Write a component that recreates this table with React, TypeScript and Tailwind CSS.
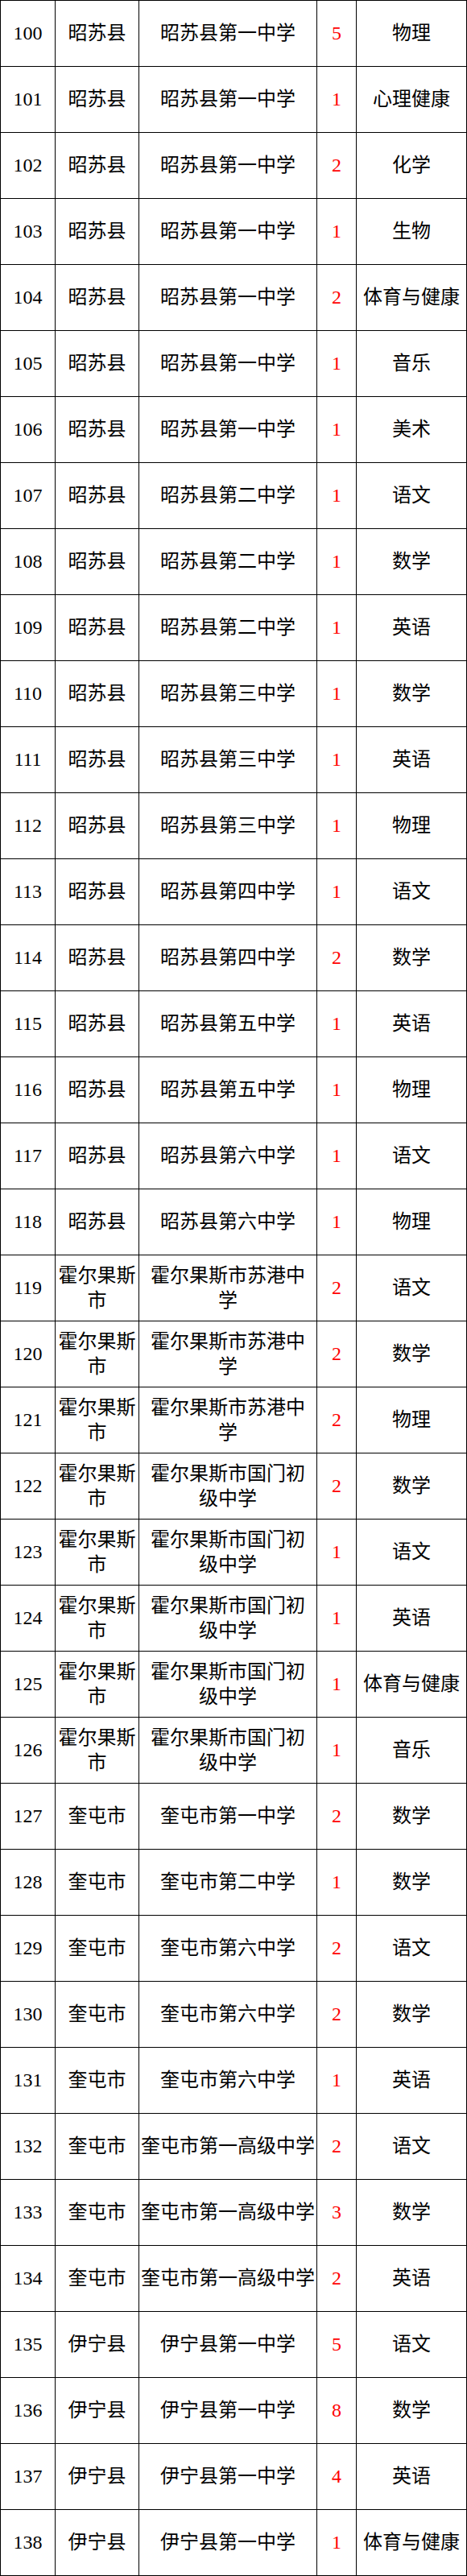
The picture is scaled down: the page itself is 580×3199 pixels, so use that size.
type Row = [number, string[], string[], number, string];

const HUO = ["霍尔果斯", "市"];
const SUGANG = ["霍尔果斯市苏港中", "学"];
const GUOMEN = ["霍尔果斯市国门初", "级中学"];

const rows: Row[] = [
  [100, ["昭苏县"], ["昭苏县第一中学"], 5, "物理"],
  [101, ["昭苏县"], ["昭苏县第一中学"], 1, "心理健康"],
  [102, ["昭苏县"], ["昭苏县第一中学"], 2, "化学"],
  [103, ["昭苏县"], ["昭苏县第一中学"], 1, "生物"],
  [104, ["昭苏县"], ["昭苏县第一中学"], 2, "体育与健康"],
  [105, ["昭苏县"], ["昭苏县第一中学"], 1, "音乐"],
  [106, ["昭苏县"], ["昭苏县第一中学"], 1, "美术"],
  [107, ["昭苏县"], ["昭苏县第二中学"], 1, "语文"],
  [108, ["昭苏县"], ["昭苏县第二中学"], 1, "数学"],
  [109, ["昭苏县"], ["昭苏县第二中学"], 1, "英语"],
  [110, ["昭苏县"], ["昭苏县第三中学"], 1, "数学"],
  [111, ["昭苏县"], ["昭苏县第三中学"], 1, "英语"],
  [112, ["昭苏县"], ["昭苏县第三中学"], 1, "物理"],
  [113, ["昭苏县"], ["昭苏县第四中学"], 1, "语文"],
  [114, ["昭苏县"], ["昭苏县第四中学"], 2, "数学"],
  [115, ["昭苏县"], ["昭苏县第五中学"], 1, "英语"],
  [116, ["昭苏县"], ["昭苏县第五中学"], 1, "物理"],
  [117, ["昭苏县"], ["昭苏县第六中学"], 1, "语文"],
  [118, ["昭苏县"], ["昭苏县第六中学"], 1, "物理"],
  [119, HUO, SUGANG, 2, "语文"],
  [120, HUO, SUGANG, 2, "数学"],
  [121, HUO, SUGANG, 2, "物理"],
  [122, HUO, GUOMEN, 2, "数学"],
  [123, HUO, GUOMEN, 1, "语文"],
  [124, HUO, GUOMEN, 1, "英语"],
  [125, HUO, GUOMEN, 1, "体育与健康"],
  [126, HUO, GUOMEN, 1, "音乐"],
  [127, ["奎屯市"], ["奎屯市第一中学"], 2, "数学"],
  [128, ["奎屯市"], ["奎屯市第二中学"], 1, "数学"],
  [129, ["奎屯市"], ["奎屯市第六中学"], 2, "语文"],
  [130, ["奎屯市"], ["奎屯市第六中学"], 2, "数学"],
  [131, ["奎屯市"], ["奎屯市第六中学"], 1, "英语"],
  [132, ["奎屯市"], ["奎屯市第一高级中学"], 2, "语文"],
  [133, ["奎屯市"], ["奎屯市第一高级中学"], 3, "数学"],
  [134, ["奎屯市"], ["奎屯市第一高级中学"], 2, "英语"],
  [135, ["伊宁县"], ["伊宁县第一中学"], 5, "语文"],
  [136, ["伊宁县"], ["伊宁县第一中学"], 8, "数学"],
  [137, ["伊宁县"], ["伊宁县第一中学"], 4, "英语"],
  [138, ["伊宁县"], ["伊宁县第一中学"], 1, "体育与健康"],
];

const cell =
  "h-[82px] border-r border-b border-black flex flex-col items-center justify-center text-center whitespace-nowrap leading-[31px]";

function Lines({ lines }: { lines: string[] }) {
  return (
    <>
      {lines.map((l, i) => (
        <span key={i}>{l}</span>
      ))}
    </>
  );
}

export default function App() {
  return (
    <div className="w-[580px] bg-white text-black text-[24px] font-['Liberation_Serif','Noto_Sans_CJK_SC',serif]">
      <div className="grid grid-cols-[68px_104px_221px_49px_137px] border-l border-t border-black">
        {rows.map(([no, county, school, count, subject]) => (
          <div key={no} className="contents">
            <div className={cell}>{no}</div>
            <div className={cell}>
              <Lines lines={county} />
            </div>
            <div className={cell}>
              <Lines lines={school} />
            </div>
            <div className={`${cell} text-[#ff0000]`}>{count}</div>
            <div className={cell}>{subject}</div>
          </div>
        ))}
      </div>
    </div>
  );
}
